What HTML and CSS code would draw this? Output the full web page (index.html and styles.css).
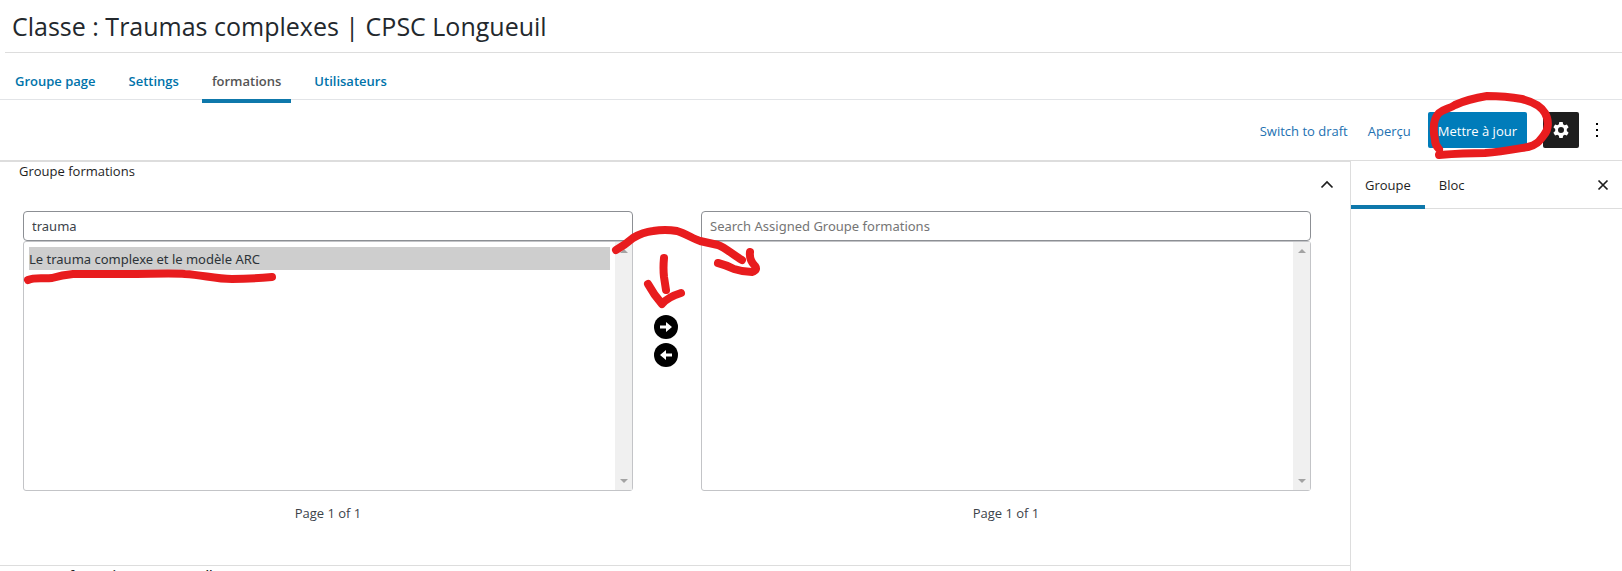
FILE: index.html
```html
<!DOCTYPE html>
<html lang="fr">

<head>
    <meta charset="UTF-8">
    <meta name="viewport" content="width=device-width, initial-scale=1.0">
    <title>Classe : Traumas complexes | CPSC Longueuil</title>
    <link rel="stylesheet" href="styles.css">
</head>

<body>

    <header class="page-header">
        <h1>Classe : Traumas complexes | CPSC Longueuil</h1>
    </header>

    <nav class="page-tabs">
        <a href="#page">Groupe page</a>
        <a href="#settings">Settings</a>
        <a href="#formations" class="active">formations</a>
        <a href="#users">Utilisateurs</a>
    </nav>

    <!-- Editor toolbar -->
    <div class="toolbar">
        <button type="button" class="btn-link">Switch to draft</button>
        <button type="button" class="btn-link">Aperçu</button>
        <div class="update">
            <button type="button" class="btn-primary">Mettre à jour</button>
            <svg class="mark mark-circle" width="130" height="70" viewBox="0 0 130 70" aria-hidden="true">
                <path d="M15 57 Q11 53 11 48 C9 38 9 27 15 21 C20 17 25 17 31 13 Q44 7 63 4 C75 4 87 5 98 7 C110 10 117 14 121 21 C125 28 125 37 120 43 C115 50 112 53 104 55 C92 57 77 60 61 61 Q40 61 15 63" />
            </svg>
        </div>
        <button type="button" class="btn-settings" aria-label="Réglages">
            <svg width="24" height="24" viewBox="0 0 24 24">
                <path fill="#fff" fill-rule="evenodd" d="M10.300 4h3.400l.4 2.300 1.600.9 2.200-.8 1.700 2.900-1.800 1.600v2.200l1.800 1.600-1.700 2.900-2.200-.8-1.600.9-.4 2.300h-3.400l-.4-2.300-1.600-.9-2.200.8-1.700-2.900 1.800-1.600v-2.200L4.400 9.300l1.700-2.900 2.200.8 1.600-.9zM12 9a3 3 0 1 0 0 6 3 3 0 0 0 0-6z" />
            </svg>
        </button>
        <button type="button" class="btn-more" aria-label="Options">
            <svg width="24" height="24" viewBox="0 0 24 24">
                <path d="M11 5h2v2h-2zM11 11h2v2h-2zM11 17h2v2h-2z" />
            </svg>
        </button>
    </div>

    <div class="editor">
        <main class="content">
            <section class="metabox">
                <div class="metabox-header">
                    <h2>Groupe formations</h2>
                    <button type="button" class="btn-toggle" aria-label="Replier">
                        <svg width="24" height="24" viewBox="0 0 24 24">
                            <path d="M6.500 14.500L12 9l5.500 5.500" fill="none" stroke="#1e1e1e" stroke-width="1.700" />
                        </svg>
                    </button>
                </div>

                <div class="selector">
                    <div class="selector-side">
                        <input type="text" value="trauma" aria-label="Search All Groupe formations">
                        <div class="list">
                            <select multiple aria-label="All Groupe formations">
                                <option selected>Le trauma complexe et le modèle ARC</option>
                            </select>
                            <div class="scroll"><i class="up"></i><i class="down"></i></div>
                            <svg class="mark mark-underline" width="260" height="20" viewBox="0 0 260 20" aria-hidden="true">
                                <path d="M8 12 C15 9 23 11 32 10 Q42 7 53 6 H106 C130 6 153 5 165 6 C183 7 195 11 212 11 Q230 11 252 9" />
                            </svg>
                        </div>
                        <p>Page 1 of 1</p>
                    </div>

                    <div class="selector-actions">
                        <button type="button" aria-label="Ajouter">
                            <svg width="24" height="24" viewBox="0 0 24 24">
                                <circle cx="12" cy="12" r="12" />
                                <path fill="#fff" d="M6 10.500h6V7l6 5-6 5v-3.500H6z" />
                            </svg>
                        </button>
                        <button type="button" aria-label="Retirer">
                            <svg width="24" height="24" viewBox="0 0 24 24">
                                <circle cx="12" cy="12" r="12" />
                                <path fill="#fff" d="M18 10.500h-6V7l-6 5 6 5v-3.500h6z" />
                            </svg>
                        </button>
                        <svg class="mark mark-arrows" width="160" height="90" viewBox="0 0 160 90" aria-hidden="true">
                            <path d="M13 29 Q22 24 30 17 Q40 11 50 10 Q62 8 74 10 C84 13 90 18 97 20 Q106 22 115 24 C123 27 130 34 139 39" />
                            <path d="M115 42 Q123 44 131 48 Q140 51 149 51 Q155 49 152 45 Q146 39 147 31" />
                            <path d="M61 37 Q60 47 61 56 L63 69" />
                            <path d="M45 63 Q51 74 59 83 Q65 76 78 72" />
                        </svg>
                    </div>

                    <div class="selector-side">
                        <input type="text" placeholder="Search Assigned Groupe formations" aria-label="Search Assigned Groupe formations">
                        <div class="list">
                            <select multiple aria-label="Assigned Groupe formations"></select>
                            <div class="scroll"><i class="up"></i><i class="down"></i></div>
                        </div>
                        <p>Page 1 of 1</p>
                    </div>
                </div>
            </section>

            <section class="metabox metabox-next">
                <h2>Groupe formations Auto-enroll</h2>
            </section>
        </main>

        <aside class="sidebar">
            <div class="sidebar-tabs">
                <button type="button" class="active">Groupe</button>
                <button type="button">Bloc</button>
                <button type="button" class="btn-close" aria-label="Fermer">
                    <svg width="24" height="24" viewBox="0 0 24 24">
                        <path d="M7.500 7.500l9 9M16.500 7.500l-9 9" stroke="#1e1e1e" stroke-width="1.700" />
                    </svg>
                </button>
            </div>
        </aside>
    </div>

</body>

</html>
```
FILE: styles.css
```css
* {
    margin: 0;
    padding: 0;
    box-sizing: border-box;
}

body {
    display: flex;
    flex-direction: column;
    height: 100vh;
    overflow: hidden;
    background-color: #fff;
    color: #3c434a;
    font-family: 'Open Sans', 'Noto Sans', sans-serif;
    font-size: 13px;
    line-height: 20px;
}

button {
    border: none;
    background: none;
    color: #1e1e1e;
    font: inherit;
    cursor: pointer;
}

svg {
    display: block;
}

.page-header {
    flex: none;
    margin-left: 5px;
    padding: 8px 7px;
    border-bottom: 1px solid #ddd;
}

h1 {
    color: #23282d;
    font-size: 25px;
    font-weight: 500;
    line-height: 36px;
}

.page-tabs {
    display: flex;
    flex: none;
    height: 47px;
    padding: 0 5px;
    gap: 13px;
    border-bottom: 1px solid #e2e4e7;
}

.page-tabs a {
    height: 50px;
    padding: 18px 10px 0;
    color: #0073aa;
    font-weight: 600;
    text-decoration: none;
}

.page-tabs .active {
    border-bottom: 4px solid #0e78ab;
    color: #555;
}

/* Toolbar */
.toolbar {
    display: flex;
    flex: none;
    justify-content: flex-end;
    align-items: center;
    height: 61px;
    padding-right: 13px;
    border-bottom: 1px solid #ddd;
}

.btn-link {
    margin-right: 20px;
    padding-top: 2px;
    color: #2271b1;
}

.update {
    position: relative;
    margin: 0 16px 0 -3px;
}

.btn-primary {
    height: 36px;
    padding: 2px 10px 0;
    border-radius: 2px;
    background-color: #007cba;
    color: #fff;
}

.btn-settings {
    width: 36px;
    height: 36px;
    padding: 0 6px;
    border-radius: 2px;
    background-color: #1e1e1e;
}

.btn-more {
    margin-left: 6px;
}

/* Hand-drawn marks */
.mark {
    position: absolute;
    z-index: 1;
    fill: none;
    stroke: #e81c1e;
    stroke-width: 8;
    stroke-linecap: round;
    stroke-linejoin: round;
    pointer-events: none;
}

.mark-circle {
    top: -20px;
    left: -4px;
}

.mark-underline {
    top: 26px;
    left: -4px;
}

.mark-arrows {
    top: 10px;
    left: -30px;
}

/* Editor */
.editor {
    display: flex;
    flex: 1;
    min-height: 0;
}

.content {
    flex: 1;
    min-width: 0;
    overflow: hidden;
    border-top: 1px solid #ddd;
}

.metabox-header {
    display: flex;
    justify-content: space-between;
    height: 49px;
    padding: 0 11px 0 19px;
}

h2 {
    color: #1e1e1e;
    font-size: 13px;
    font-weight: 400;
    line-height: 18px;
}

.btn-toggle {
    height: 24px;
    margin-top: 11px;
}

.selector {
    display: grid;
    grid-template-columns: 1fr 68px 1fr;
    padding: 0 39px 42px 23px;
}

.selector-side input {
    display: block;
    width: 100%;
    height: 30px;
    padding: 0 8px;
    border: 1px solid #8c8f94;
    border-radius: 4px;
    background-color: #fff;
    color: #3c434a;
    font-family: 'Noto Sans', sans-serif;
    font-size: 13px;
}

.selector-side input::placeholder {
    color: #757575;
}

.list {
    display: flex;
    position: relative;
    height: 250px;
    border: 1px solid #c3c4c7;
    border-radius: 3px;
}

.list select {
    flex: 1;
    min-width: 0;
    padding: 5px;
    border: none;
    outline: none;
    background: none;
    color: #2c3338;
    font-family: 'Noto Sans', sans-serif;
    font-size: 13px;
    overflow: hidden;
}

.list option {
    min-height: 23px;
    padding: 3px 0 1px;
    line-height: 19px;
}

.list option:checked {
    background-color: #cecece;
    color: #2c3338;
}

.scroll {
    display: flex;
    flex-direction: column;
    justify-content: space-between;
    align-items: center;
    width: 17px;
    padding: 7px 0;
    background-color: #f0f0f0;
}

.scroll i {
    border: 4px solid transparent;
}

.scroll .up {
    border-top: none;
    border-bottom-color: #a3a3a3;
}

.scroll .down {
    border-bottom: none;
    border-top-color: #a3a3a3;
}

.selector-side p {
    margin-top: 12px;
    text-align: center;
}

.selector-actions {
    display: flex;
    position: relative;
    flex-direction: column;
    align-items: center;
    gap: 4px;
    padding: 104px 2px 0 0;
}

.metabox-next {
    padding: 0 19px;
    border-top: 1px solid #ddd;
}

.metabox-next h2 {
    font-weight: 600;
}

/* Sidebar */
.sidebar {
    width: 272px;
    border-left: 1px solid #ddd;
}

.sidebar-tabs {
    display: flex;
    height: 48px;
    border-bottom: 1px solid #ddd;
}

.sidebar-tabs button {
    height: 48px;
    padding: 0 14px;
}

.sidebar-tabs .active {
    border-bottom: 4px solid #0e78ab;
    padding-top: 4px;
}

.sidebar-tabs .btn-close {
    margin-left: auto;
    padding: 0 7px;
}
```
